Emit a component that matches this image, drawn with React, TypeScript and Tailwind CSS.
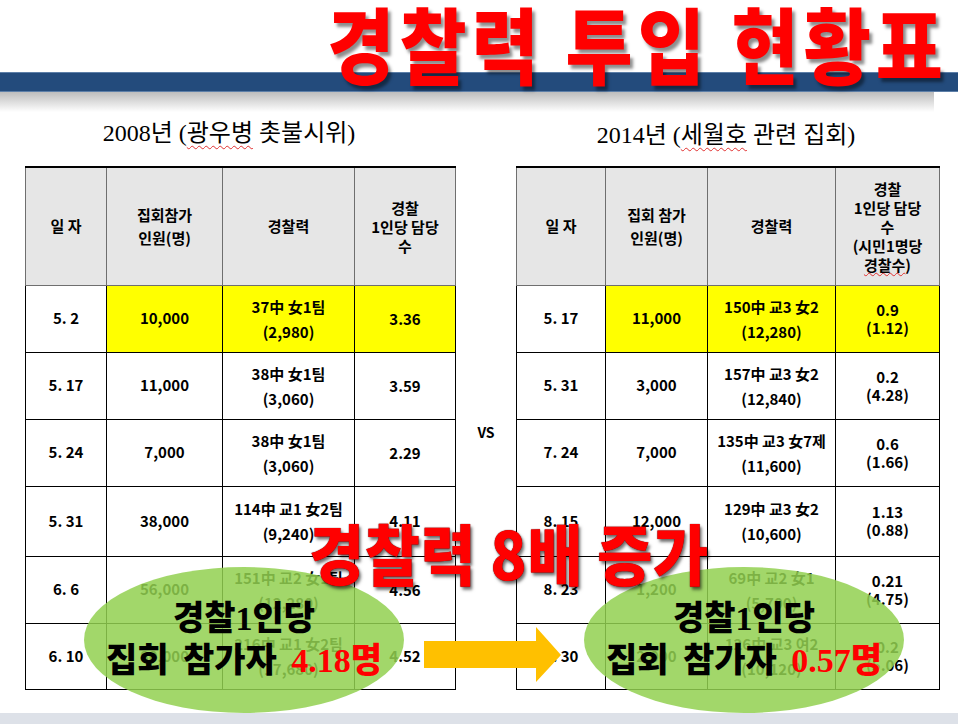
import React from "react";

type Row = {
  date: string;
  people: string;
  force: string[];
  ratio: string[];
  highlight?: boolean;
};

const leftRows: Row[] = [
  { date: "5. 2", people: "10,000", force: ["37中 女1팀", "(2,980)"], ratio: ["3.36"], highlight: true },
  { date: "5. 17", people: "11,000", force: ["38中 女1팀", "(3,060)"], ratio: ["3.59"] },
  { date: "5. 24", people: "7,000", force: ["38中 女1팀", "(3,060)"], ratio: ["2.29"] },
  { date: "5. 31", people: "38,000", force: ["114中 교1 女2팀", "(9,240)"], ratio: ["4.11"] },
  { date: "6. 6", people: "56,000", force: ["151中 교2 女1팀", "(12,280)"], ratio: ["4.56"] },
  { date: "6. 10", people: "80,000", force: ["216中 교1 女2팀", "(17,680)"], ratio: ["4.52"] },
];

const rightRows: Row[] = [
  { date: "5. 17", people: "11,000", force: ["150中 교3 女2", "(12,280)"], ratio: ["0.9", "(1.12)"], highlight: true },
  { date: "5. 31", people: "3,000", force: ["157中 교3 女2", "(12,840)"], ratio: ["0.2", "(4.28)"] },
  { date: "7. 24", people: "7,000", force: ["135中 교3 女7제", "(11,600)"], ratio: ["0.6", "(1.66)"] },
  { date: "8. 15", people: "12,000", force: ["129中 교3 女2", "(10,600)"], ratio: ["1.13", "(0.88)"] },
  { date: "8. 23", people: "1,200", force: ["69中 교2 女1", "(5,700)"], ratio: ["0.21", "(4.75)"] },
  { date: "8. 30", people: "2,000", force: ["126中 교3 여2", "(10,120)"], ratio: ["0.2", "(5.06)"] },
];

// row heights measured off the slide
const rowHeights = ["h-[67px]", "h-[67px]", "h-[67px]", "h-[70px]", "h-[67px]", "h-[66px]"];

function DataTable({
  widths,
  rows,
  peopleHead,
  ratioHead,
}: {
  widths: string[];
  rows: Row[];
  peopleHead: string;
  ratioHead: React.ReactNode;
}) {
  const head = "bg-[#e6e6e6] border border-[#6f6f6f] font-bold text-[15px] text-center align-middle";
  const cell = "border border-black text-center align-middle text-[15px] font-semibold";
  return (
    <table className="table-fixed border-collapse border-t-2 border-t-black text-black">
      <colgroup>
        {widths.map((w, i) => (
          <col key={i} className={w} />
        ))}
      </colgroup>
      <thead>
        <tr className="h-[118px]">
          <th className={head}>일 자</th>
          <th className={`${head} leading-[23px] whitespace-pre-line`}>{peopleHead}</th>
          <th className={head}>경찰력</th>
          <th className={`${head} leading-[19px]`}>{ratioHead}</th>
        </tr>
      </thead>
      <tbody>
        {rows.map((r, i) => (
          <tr key={r.date} className={rowHeights[i]}>
            <td className={cell}>{r.date}</td>
            <td className={`${cell} ${r.highlight ? "bg-[#ffff00]" : ""}`}>{r.people}</td>
            <td className={`${cell} leading-[25px] ${r.highlight ? "bg-[#ffff00]" : ""}`}>
              {r.force.map((t) => (
                <div key={t}>{t}</div>
              ))}
            </td>
            <td className={`${cell} leading-[18px] ${r.highlight ? "bg-[#ffff00]" : ""}`}>
              {r.ratio.map((t) => (
                <div key={t}>{t}</div>
              ))}
            </td>
          </tr>
        ))}
      </tbody>
    </table>
  );
}

function Bubble({ value }: { value: string }) {
  return (
    <div className="w-[320px] h-[146px] rounded-[50%] bg-[#92d050]/85 flex flex-col items-center justify-center font-black text-black text-[34px] leading-[42px] font-['Liberation_Serif','Noto_Sans_CJK_KR',serif]">
      <div>경찰1인당</div>
      <div className="[word-spacing:6px]">
        집회 참가자 <span className="text-[#ff0000]">{value}</span>
      </div>
    </div>
  );
}

export default function App() {
  return (
    <div className="relative w-[958px] h-[724px] overflow-hidden bg-white font-['Noto_Sans_CJK_KR','Liberation_Sans',sans-serif]">
      {/* top banner */}
      <div className="relative h-[112px]">
        <div className="h-[72px]" />
        <div className="h-[20px] bg-[#234b7c] border-y border-[#5d7fa8]" />
        <div className="h-[20px] mr-[24px] bg-gradient-to-b from-[#bdbdbd] to-white" />
        <div className="absolute right-[10px] top-0 text-[73px] font-black leading-none text-[#ff0000] tracking-[5px] scale-y-[1.14] origin-top [text-shadow:3px_4px_3px_rgba(0,0,0,0.45)] whitespace-nowrap">
          경찰력 투입 현황표
        </div>
      </div>

      {/* subtitles */}
      <div className="flex h-[54px] items-start pt-[3px] font-['Liberation_Serif','Noto_Sans_CJK_KR',serif] text-[24px] text-black">
        <div className="w-[458px] text-center">
          2008년 (
          <span className="underline decoration-wavy decoration-[#e03030] decoration-1 underline-offset-4">광우병</span> 촛불시위)
        </div>
        <div className="flex-1 text-center pl-[36px] pt-[2px]">
          2014년 (
          <span className="underline decoration-wavy decoration-[#e03030] decoration-1 underline-offset-4">세월호</span> 관련 집회)
        </div>
      </div>

      {/* tables */}
      <div className="flex items-start pl-[25px]">
        <DataTable
          widths={["w-[81px]", "w-[116px]", "w-[132px]", "w-[101px]"]}
          rows={leftRows}
          peopleHead={"집회참가\n인원(명)"}
          ratioHead={
            <>
              경찰
              <br />
              1인당 담당
              <br />수
            </>
          }
        />
        <div className="w-[60px] self-stretch flex items-center justify-center pt-[10px] text-[14px] font-bold">VS</div>
        <DataTable
          widths={["w-[89px]", "w-[102px]", "w-[128px]", "w-[104px]"]}
          rows={rightRows}
          peopleHead={"집회 참가\n인원(명)"}
          ratioHead={
            <>
              경찰
              <br />
              1인당 담당
              <br />수
              <br />
              (시민1명당
              <br />
              <span className="underline decoration-wavy decoration-[#e03030] decoration-1">경찰수</span>)
            </>
          }
        />
      </div>

      {/* bottom band */}
      <div className="absolute left-0 right-0 bottom-0 h-[11px] bg-[#dde1e8]" />

      {/* overlays */}
      <div className="absolute left-[84px] top-[567px]">
        <Bubble value="4.18명" />
      </div>
      <div className="absolute left-[584px] top-[567px]">
        <Bubble value="0.57명" />
      </div>

      <svg className="absolute left-[424px] top-[627px]" width="138" height="56" viewBox="0 0 138 56">
        <path d="M0 14 H112 V0 L137 28 L112 55 V41 H0 Z" fill="#ffc000" />
      </svg>

      <div className="absolute left-[309px] top-[518px] text-[60px] font-black leading-none text-[#ff0000] scale-y-[1.1] origin-top tracking-[0.5px] whitespace-nowrap [text-shadow:0_0_1px_#400,2px_3px_3px_rgba(0,0,0,0.55)]">
        경찰력 8배 증가
      </div>
    </div>
  );
}
